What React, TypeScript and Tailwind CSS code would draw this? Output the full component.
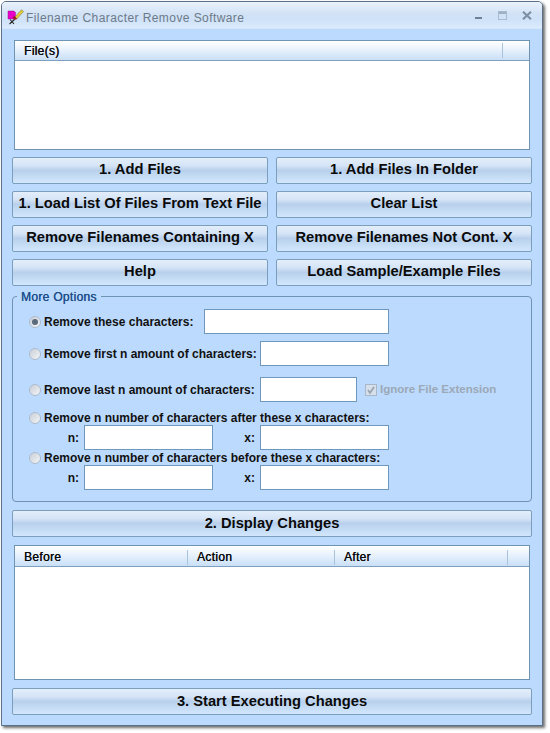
const sans = "font-['Liberation_Sans',Arial,sans-serif]";

function AppIcon() {
  return (
    <svg width="17" height="16" viewBox="0 0 17 16" className="shrink-0">
      <path d="M1 2h6l1.5 1.5V10H1z" fill="#e800c8" stroke="#9a1a9a" strokeWidth="0.5" />
      <path d="M3 10.5l4 4.5M7.5 10.5l-5 4.5" stroke="#222" strokeWidth="1.1" fill="none" />
      <path d="M7.5 8.5L14.5 0.8l2 1.7-7 7.7z" fill="#e4cf3c" stroke="#6f6a20" strokeWidth="0.5" />
      <path d="M5.5 8.5l2-1.6 2.6 2.8-2.4 1.3z" fill="#a01830" />
    </svg>
  );
}

function WindowControls() {
  return (
    <div className="flex items-start pt-[1px]">
      <div className="mt-[6px] h-[2px] w-[7px] bg-[#6f8198]" />
      <div className="ml-[16px] flex h-[9px] w-[9px] flex-col border border-[#a8bace]">
        <div className="h-[2px] bg-[#9db0c6]" />
      </div>
      <svg width="10" height="9" viewBox="0 0 10 9" className="ml-[15px] mr-[10px]">
        <path d="M1 0.8l8 7.4M9 0.8l-8 7.4" stroke="#7d8fa5" strokeWidth="2.2" />
      </svg>
    </div>
  );
}

function Btn({ label, className = "pb-[2px]" }: { label: string; className?: string }) {
  return (
    <button
      type="button"
      className={`h-[27px] rounded-[2px] border border-[#7b9ebd] bg-[linear-gradient(#e3eefa_0%,#d5e4f6_30%,#b8d0ec_50%,#c3daf3_70%,#d2e7fd_100%)] text-[14.7px] font-bold leading-[23px] whitespace-nowrap text-[#0a0a0a] ${sans} ${className}`}
    >
      {label}
    </button>
  );
}

function ListBox({
  columns,
  height,
  headerHeight,
}: {
  columns: { label: string; width: string }[];
  height: string;
  headerHeight: string;
}) {
  return (
    <div className={`mx-[2px] border border-[#6f93b3] bg-white ${height}`}>
      <div className={`flex border-b border-[#7fa0bf] bg-[linear-gradient(#ffffff_0%,#eef5fd_35%,#c9dff7_100%)] ${headerHeight}`}>
        {columns.map((c) => (
          <div key={c.label} className={`flex items-center ${c.width}`}>
            <span className="pl-[9px] text-[12px] leading-none tracking-[0.3px] text-[#0a0a0a] [text-shadow:0.3px_0_0_#0a0a0a]">{c.label}</span>
            <div className="ml-auto h-[15px] w-px bg-[#a9c3dc]" />
          </div>
        ))}
      </div>
    </div>
  );
}

function Radio({ checked = false }: { checked?: boolean }) {
  return (
    <span className="flex h-[12px] w-[12px] shrink-0 items-center justify-center rounded-full border border-[#aebccb] bg-[linear-gradient(135deg,#c8ced6,#f4f6f8)]">
      {checked && <span className="h-[6px] w-[6px] rounded-full bg-[#5c6b7c]" />}
    </span>
  );
}

function Field({ className = "" }: { className?: string }) {
  return <div className={`h-[25px] shrink-0 border border-[#6f98bf] bg-white ${className}`} />;
}

function Label({ children }: { children: string }) {
  return <span className="whitespace-nowrap text-[12px] font-bold leading-none text-[#111]">{children}</span>;
}

function PairRow() {
  return (
    <div className="mt-[1px] flex items-center leading-none">
      <div className="w-[50px] pb-[1px] text-right">
        <Label>n:</Label>
      </div>
      <Field className="ml-[5px] w-[129px]" />
      <div className="w-[42px] pb-[1px] text-right">
        <Label>x:</Label>
      </div>
      <Field className="ml-[5px] w-[129px]" />
    </div>
  );
}

export default function App() {
  return (
    <div className={`h-[733px] w-[550px] bg-white pl-px pt-px ${sans}`}>
      <div className="flex h-[725px] w-[542px] flex-col overflow-hidden rounded-t-[5px] border border-[#5a7187] bg-[#bcdafd] shadow-[2px_2px_3px_rgba(60,60,60,0.75)]">
        <div className="flex h-[27px] shrink-0 items-center justify-between border-b border-[#d5e6fa] bg-[linear-gradient(#eaf2fc_0%,#d2e2f5_45%,#cfe2f8_70%,#dcebfd_100%)]">
          <div className="flex items-center pl-[5px] pt-[3px]">
            <AppIcon />
            <span className="ml-[2px] pt-[2px] text-[12px] tracking-[0.42px] text-[#6d7a88]">Filename Character Remove Software</span>
          </div>
          <WindowControls />
        </div>

        <div className="flex flex-1 flex-col px-[10px] pt-[11px]">
          <ListBox columns={[{ label: "File(s)", width: "w-[488px]" }]} height="h-[110px]" headerHeight="h-[20px]" />

          <div className="mt-[7px] grid grid-cols-2 gap-x-[8px] gap-y-[7px]">
            <Btn label="1. Add Files" />
            <Btn label="1. Add Files In Folder" />
            <Btn label="1. Load List Of Files From Text File" />
            <Btn label="Clear List" />
            <Btn label="Remove Filenames Containing X" />
            <Btn label="Remove Filenames Not Cont. X" />
            <Btn label="Help" />
            <Btn label="Load Sample/Example Files" />
          </div>

          <div className="relative mt-[10px] h-[206px] rounded-[4px] border border-[#6f93b3] pl-[16px] pt-[12px]">
            <span className="absolute -top-[6px] left-[4px] bg-[#bcdafd] px-[4px] text-[12px] leading-[13px] tracking-[0.3px] text-[#1d4f8c] [text-shadow:0.3px_0_0_#1d4f8c]">
              More Options
            </span>

            <div className="flex items-center">
              <Radio checked />
              <span className="ml-[3px] w-[160px] pb-[2px] leading-none"><Label>Remove these characters:</Label></span>
              <Field className="w-[185px]" />
            </div>
            <div className="mt-[7px] flex items-center">
              <Radio />
              <span className="ml-[3px] w-[216px] pb-[2px] leading-none"><Label>Remove first n amount of characters:</Label></span>
              <Field className="w-[129px]" />
            </div>
            <div className="mt-[11px] flex items-center">
              <Radio />
              <span className="ml-[3px] w-[216px] pb-[2px] leading-none"><Label>Remove last n amount of characters:</Label></span>
              <Field className="w-[97px]" />
              <span className="ml-[8px] flex h-[12px] w-[12px] items-center justify-center border border-[#a9b8c8] bg-[#d6e0ec]">
                <svg width="10" height="10" viewBox="0 0 10 10">
                  <path d="M2 5l2 3 4-6" fill="none" stroke="#9aa5b1" strokeWidth="1.8" />
                </svg>
              </span>
              <span className="ml-[3px] whitespace-nowrap text-[11.5px] font-bold leading-none text-[#9ba8b6]">Ignore File Extension</span>
            </div>
            <div className="mt-[10px] flex h-[12px] items-center">
              <Radio />
              <span className="ml-[3px] pb-[2px] leading-none"><Label>Remove n number of characters after these x characters:</Label></span>
            </div>
            <PairRow />
            <div className="mt-[2px] flex h-[12px] items-center">
              <Radio />
              <span className="ml-[3px] pb-[2px] leading-none"><Label>Remove n number of characters before these x characters:</Label></span>
            </div>
            <PairRow />
          </div>

          <Btn label="2. Display Changes" className="mt-[8px] w-full" />

          <div className="mt-[8px]">
            <ListBox
              columns={[
                { label: "Before", width: "w-[173px]" },
                { label: "Action", width: "w-[147px]" },
                { label: "After", width: "w-[173px]" },
              ]}
              height="h-[135px]"
              headerHeight="h-[21px] pt-[2px]"
            />
          </div>

          <Btn label="3. Start Executing Changes" className="mt-[8px] w-full" />
        </div>
      </div>
    </div>
  );
}
